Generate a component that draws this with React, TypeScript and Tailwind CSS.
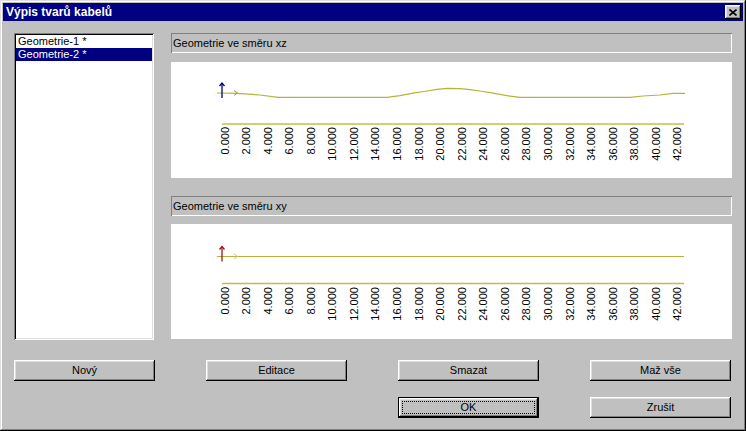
import React from 'react';

const raised =
  'shadow-[inset_-1px_-1px_0_#000000,inset_1px_1px_0_#ffffff,inset_-2px_-2px_0_#808080,inset_2px_2px_0_#dfdfdf]';

const labels = Array.from({ length: 22 }, (_, i) => (i * 2).toFixed(3));

function Chart({ height, axisY, labelTop, kind }: { height: number; axisY: number; labelTop: number; kind: 'xz' | 'xy' }) {
  const xz =
    '46,31 66,31.3 89,33 107,35.3 216,35.3 229,33.7 242,31.2 256,29 266,27.3 276,26.3 289,26.7 299,27.7 309,29 322,31.2 336,33.7 349,35.3 459,35.3 472,34 489,33 502,31.3 514,31.3';
  const lineY = kind === 'xz' ? 31 : 32.5;
  return (
    <div className="bg-white">
      <svg width={561} height={height} viewBox={`0 0 561 ${height}`} className="block">
        {kind === 'xz' ? (
          <polyline points={xz} fill="none" stroke="#b4b43c" strokeWidth={1.2} />
        ) : (
          <line x1={46} y1={lineY} x2={513} y2={lineY} stroke="#b4b43c" strokeWidth={1.2} />
        )}
        {/* little direction marker on the cable */}
        <polyline
          points={`63,${lineY - 2.5} 66.5,${lineY} 63,${lineY + 2.5}`}
          fill="none"
          stroke={kind === 'xz' ? '#a0a030' : '#c8c890'}
          strokeWidth={1}
        />
        {/* vertical axis arrow */}
        <g stroke={kind === 'xz' ? '#000080' : '#a01020'} strokeWidth={1.3} fill="none">
          <line x1={51} y1={lineY - 10} x2={51} y2={lineY + 5} />
          <polyline points={`48.5,${lineY - 7} 51,${lineY - 10} 53.5,${lineY - 7}`} />
        </g>
        <line x1={51} y1={axisY} x2={513} y2={axisY} stroke="#c0c040" strokeWidth={1.3} />
        {labels.map((t, i) => {
          const cx = 53.5 + i * 21.57 + 4;
          return (
            <text
              key={t}
              x={cx}
              y={labelTop}
              textAnchor="end"
              transform={`rotate(-90 ${cx} ${labelTop})`}
              fontSize={11}
              fill="#000"
            >
              {t}
            </text>
          );
        })}
      </svg>
    </div>
  );
}

function Field({ text }: { text: string }) {
  return (
    <div className="h-[20px] pl-[2px] flex items-center text-[11px] text-black shadow-[inset_1px_1px_0_#808080,inset_-1px_-1px_0_#ffffff]">
      {text}
    </div>
  );
}

function Btn({ label, isDefault }: { label: string; isDefault?: boolean }) {
  if (isDefault) {
    return (
      <div className="h-[21px] w-[141px] border border-black bg-[#c0c0c0]">
        <div className={`h-full w-full p-[3px] ${raised}`}>
          <div className="h-full w-full border border-dotted border-black flex items-center justify-center text-[11px] text-black">
            {label}
          </div>
        </div>
      </div>
    );
  }
  return (
    <div className={`h-[21px] w-[141px] bg-[#c0c0c0] flex items-center justify-center text-[11px] text-black ${raised}`}>
      {label}
    </div>
  );
}

export default function App() {
  return (
    <div className="w-[746px] h-[431px] bg-[#c0c0c0] p-[3px] font-['Liberation_Sans',Arial,sans-serif] shadow-[inset_-1px_-1px_0_#000000,inset_1px_1px_0_#dfdfdf,inset_-2px_-2px_0_#808080,inset_2px_2px_0_#ffffff]">
      {/* Title bar */}
      <div className="h-[18px] bg-[#000080] flex items-center justify-between pl-[3px] pr-[2px]">
        <span className="text-white font-bold text-[12px] leading-none">Výpis tvarů kabelů</span>
        <div className={`w-[16px] h-[14px] bg-[#c0c0c0] flex items-center justify-center ${raised}`}>
          <svg width="8" height="7" viewBox="0 0 8 7">
            <path d="M0.5 0.5 L7.5 6.5 M7.5 0.5 L0.5 6.5" stroke="#000" strokeWidth={1.6} />
          </svg>
        </div>
      </div>

      <div className="px-[11px] pt-[12px]">
        <div className="flex gap-[17px]">
          {/* List of geometries */}
          <div className="w-[140px] h-[307px] bg-white p-[2px] shadow-[inset_1px_1px_0_#808080,inset_-1px_-1px_0_#ffffff,inset_2px_2px_0_#000000,inset_-2px_-2px_0_#dfdfdf]">
            <div className="h-[13px] pl-[2px] text-[11px] leading-[13px] text-black">Geometrie-1 *</div>
            <div className="h-[13px] pl-[2px] text-[11px] leading-[13px] text-white bg-[#000080]">Geometrie-2 *</div>
          </div>

          {/* Charts */}
          <div className="w-[561px] flex flex-col">
            <Field text="Geometrie ve směru xz" />
            <div className="mt-[9px]">
              <Chart height={116} axisY={62} labelTop={65} kind="xz" />
            </div>
            <div className="mt-[18px]">
              <Field text="Geometrie ve směru xy" />
            </div>
            <div className="mt-[8px]">
              <Chart height={115} axisY={59.5} labelTop={63} kind="xy" />
            </div>
          </div>
        </div>

        {/* Buttons */}
        <div className="mt-[20px] grid grid-cols-[141px_141px_141px_141px] gap-x-[51px] gap-y-[16px]">
          <Btn label="Nový" />
          <Btn label="Editace" />
          <Btn label="Smazat" />
          <Btn label="Maž vše" />
          <div className="col-start-3">
            <Btn label="OK" isDefault />
          </div>
          <Btn label="Zrušit" />
        </div>
      </div>
    </div>
  );
}
